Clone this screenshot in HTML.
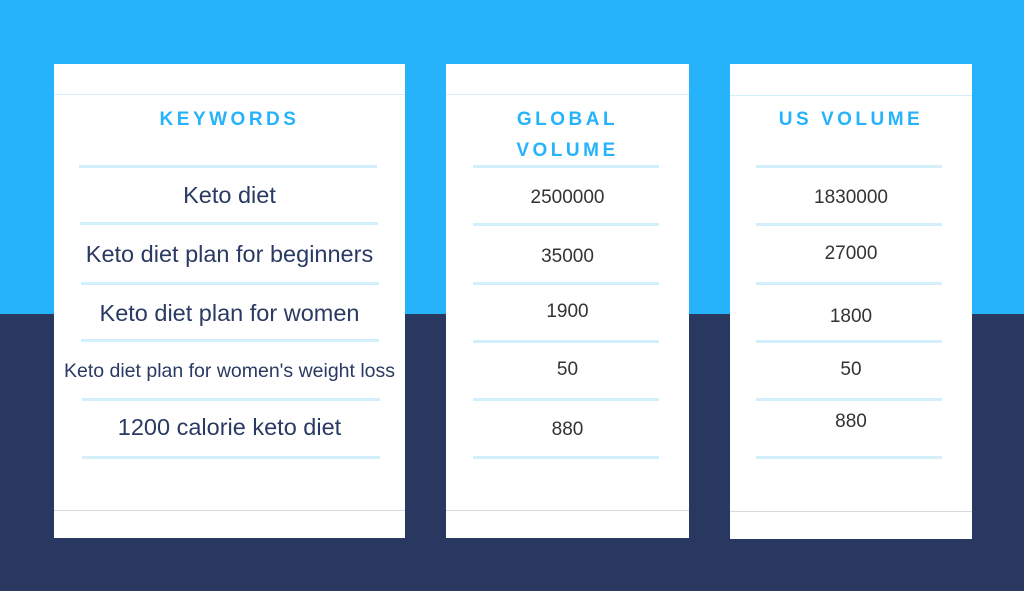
<html><head><style>
body{margin:0;width:1024px;height:591px;position:relative;overflow:hidden;background:#283860;font-family:"Liberation Sans",sans-serif}
.top{position:absolute;left:0;top:0;width:1024px;height:314px;background:#26b3fb}
.card{position:absolute;background:#fff}
.l{position:absolute;height:3px;background:#d3effc}
.h{position:absolute;height:1px;background:#d3effc}
.b{position:absolute;height:1px;background:#d8d8e0}
.t{position:absolute;text-align:center;white-space:nowrap}
.hd{color:#26b3fb;font-weight:bold;font-size:19px;letter-spacing:3.5px;line-height:31px}
.k{color:#2a3a63;font-size:23.5px}
.n{color:#333;font-size:19px}
</style></head><body>
<div class="top"></div>
<div class="card" style="left:54px;top:64px;width:351px;height:474px"></div>
<div class="card" style="left:446px;top:64px;width:243px;height:474px"></div>
<div class="card" style="left:730px;top:64px;width:242px;height:475px"></div>
<div class="h" style="left:54px;top:94px;width:351px"></div>
<div class="h" style="left:446px;top:94px;width:243px"></div>
<div class="h" style="left:730px;top:95px;width:242px"></div>
<div class="b" style="left:54px;top:510px;width:351px"></div>
<div class="b" style="left:446px;top:510px;width:243px"></div>
<div class="b" style="left:730px;top:511px;width:242px"></div>

<div class="t hd" style="left:54px;width:351px;top:104px">KEYWORDS</div>
<div class="t hd" style="left:446px;width:243px;top:104px">GLOBAL<br>VOLUME</div>
<div class="t hd" style="left:730px;width:242px;top:104px">US VOLUME</div>

<div class="l" style="left:79px;top:165px;width:298px"></div>
<div class="l" style="left:80px;top:222px;width:298px"></div>
<div class="l" style="left:81px;top:282px;width:298px"></div>
<div class="l" style="left:81px;top:339px;width:298px"></div>
<div class="l" style="left:82px;top:398px;width:298px"></div>
<div class="l" style="left:82px;top:456px;width:298px"></div>

<div class="l" style="left:473px;top:165px;width:186px"></div>
<div class="l" style="left:473px;top:223px;width:186px"></div>
<div class="l" style="left:473px;top:282px;width:186px"></div>
<div class="l" style="left:473px;top:340px;width:186px"></div>
<div class="l" style="left:473px;top:398px;width:186px"></div>
<div class="l" style="left:473px;top:456px;width:186px"></div>

<div class="l" style="left:756px;top:165px;width:186px"></div>
<div class="l" style="left:756px;top:223px;width:186px"></div>
<div class="l" style="left:756px;top:282px;width:186px"></div>
<div class="l" style="left:756px;top:340px;width:186px"></div>
<div class="l" style="left:756px;top:398px;width:186px"></div>
<div class="l" style="left:756px;top:456px;width:186px"></div>

<div class="t k" style="left:54px;width:351px;top:182px">Keto diet</div>
<div class="t k" style="left:54px;width:351px;top:241px">Keto diet plan for beginners</div>
<div class="t k" style="left:54px;width:351px;top:300px">Keto diet plan for women</div>
<div class="t k" style="left:54px;width:351px;top:360px;font-size:19.5px">Keto diet plan for women's weight loss</div>
<div class="t k" style="left:54px;width:351px;top:414px">1200 calorie keto diet</div>

<div class="t n" style="left:446px;width:243px;top:187px">2500000</div>
<div class="t n" style="left:446px;width:243px;top:246px">35000</div>
<div class="t n" style="left:446px;width:243px;top:301px">1900</div>
<div class="t n" style="left:446px;width:243px;top:359px">50</div>
<div class="t n" style="left:446px;width:243px;top:419px">880</div>

<div class="t n" style="left:730px;width:242px;top:187px">1830000</div>
<div class="t n" style="left:730px;width:242px;top:243px">27000</div>
<div class="t n" style="left:730px;width:242px;top:306px">1800</div>
<div class="t n" style="left:730px;width:242px;top:359px">50</div>
<div class="t n" style="left:730px;width:242px;top:411px">880</div>
</body></html>
